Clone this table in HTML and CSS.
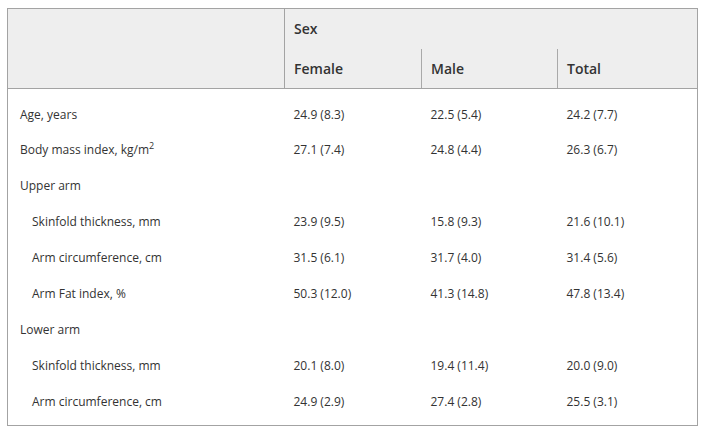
FILE: index.html
```html
<!DOCTYPE html>
<html>
<head>
<meta charset="utf-8">
<link rel="stylesheet" href="styles.css">
</head>
<body>
<table class="data">
  <colgroup>
    <col class="c-label">
    <col class="c-f">
    <col class="c-m">
    <col class="c-t">
  </colgroup>
  <thead>
    <tr>
      <th rowspan="2" class="blank"></th>
      <th colspan="3" class="group">Sex</th>
    </tr>
    <tr>
      <th class="sub">Female</th>
      <th class="sub div">Male</th>
      <th class="sub div">Total</th>
    </tr>
  </thead>
  <tbody>
    <tr class="first"><td>Age, years</td><td>24.9 (8.3)</td><td>22.5 (5.4)</td><td>24.2 (7.7)</td></tr>
    <tr><td>Body mass index, kg/m<sup>2</sup></td><td>27.1 (7.4)</td><td>24.8 (4.4)</td><td>26.3 (6.7)</td></tr>
    <tr><td>Upper arm</td><td></td><td></td><td></td></tr>
    <tr><td class="ind">Skinfold thickness, mm</td><td>23.9 (9.5)</td><td>15.8 (9.3)</td><td>21.6 (10.1)</td></tr>
    <tr><td class="ind">Arm circumference, cm</td><td>31.5 (6.1)</td><td>31.7 (4.0)</td><td>31.4 (5.6)</td></tr>
    <tr><td class="ind">Arm Fat index, %</td><td>50.3 (12.0)</td><td>41.3 (14.8)</td><td>47.8 (13.4)</td></tr>
    <tr><td>Lower arm</td><td></td><td></td><td></td></tr>
    <tr><td class="ind">Skinfold thickness, mm</td><td>20.1 (8.0)</td><td>19.4 (11.4)</td><td>20.0 (9.0)</td></tr>
    <tr class="last"><td class="ind">Arm circumference, cm</td><td>24.9 (2.9)</td><td>27.4 (2.8)</td><td>25.5 (3.1)</td></tr>
  </tbody>
</table>
</body>
</html>
```
FILE: styles.css
```css
html, body {
  background: #ffffff;
}
body {
  margin: 8px 7px;
  font-family: "Open Sans", "Liberation Sans", sans-serif;
  color: #333333;
}
.data {
  width: 690px;
  border-collapse: collapse;
  table-layout: fixed;
  border: 1px solid #a3a3a3;
}
.c-label { width: 277px; }
.c-f { width: 137px; }
.c-m { width: 136px; }
.c-t { width: 140px; }

thead th {
  background: #eeeeee;
  font-size: 14px;
  font-weight: 600;
  text-align: left;
  color: #333333;
  height: 40px;
  padding: 0 9px;
  box-sizing: border-box;
  vertical-align: middle;
}
thead tr:last-child th {
  border-bottom: 1px solid #a3a3a3;
}
thead .blank {
  border-right: 1px solid #a3a3a3;
  border-bottom: 1px solid #a3a3a3;
}
thead .div {
  border-left: 1px solid #a9a9a9;
}
tbody td {
  font-size: 12px;
  height: 36px;
  padding: 0 9px;
  box-sizing: border-box;
  vertical-align: middle;
  line-height: 16px;
  white-space: nowrap;
}
tbody td:first-child {
  padding-left: 12px;
}
tbody td.ind {
  padding-left: 24px;
}
tbody tr.first td {
  height: 43px;
  padding-top: 9px;
}
tbody tr.last td {
  height: 42px;
  padding-bottom: 4px;
}
sup {
  font-size: 9px;
  line-height: 0;
  vertical-align: 5px;
}
```
